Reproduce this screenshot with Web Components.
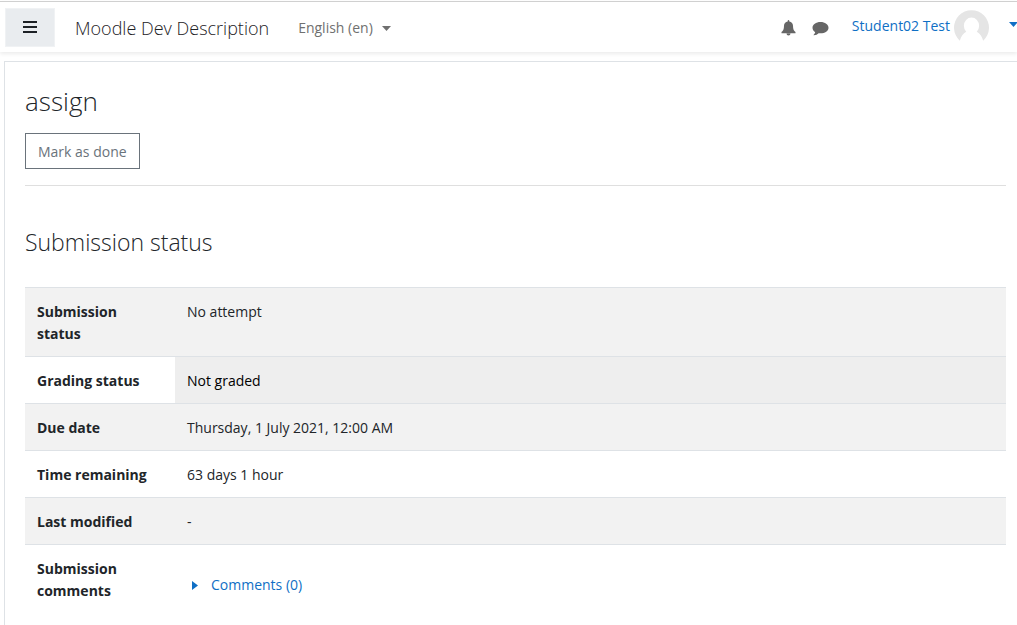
<!DOCTYPE html>
<html lang="en">
<head>
<meta charset="utf-8">
<meta name="viewport" content="width=device-width, initial-scale=1">
<title>Moodle Dev Description: assign</title>
<style>
  html, body { margin: 0; }
  body {
    background: #fff;
    color: #212529;
    font: 14px/22px "Segoe UI", "Open Sans", "Noto Sans", sans-serif;
    overflow-x: hidden;
  }
</style>
</head>
<body>
<moodle-page></moodle-page>

<template id="navbar-template">
  <style>
    :host { display: block; border-top: 1px solid #d0d0d0; margin-top: 1px; background: #fff; box-shadow: 0 2px 4px rgba(0,0,0,.08); overflow-x: clip; }
    nav { display: flex; align-items: center; height: 50px; padding-left: 5px; }
    .toggle { width: 50px; height: 39px; padding: 0; border: 1px solid #f0f2f4; background: #e9ecef; display: grid; place-items: center; }
    .toggle svg { display: block; }
    .brand { margin-left: 20px; font-size: 18px; font-weight: 300; color: #1d2125; text-decoration: none; white-space: nowrap; padding-top: 2px; }
    .lang { margin-left: 29px; padding: 2px 0 0; border: 0; background: none; font: inherit; color: #707070; display: flex; align-items: center; gap: 9px; white-space: nowrap; }
    .icons { margin-left: auto; display: flex; align-items: center; gap: 16px; margin-right: 23px; padding-top: 2px; }
    .icons button { padding: 0; border: 0; background: none; display: block; color: #666; }
    .icons svg { display: block; }
    .user { display: flex; align-items: center; gap: 4px; color: #0f6fc5; text-decoration: none; white-space: nowrap; }
    .name { padding-bottom: 2px; }
    .caret { margin: 0 -1px 6px 16px; }
  </style>
  <nav aria-label="Site">
    <button class="toggle" type="button" aria-label="Side panel">
      <svg width="14" height="12" viewBox="0 0 14 12"><path d="M0 1h14M0 6h14M0 11h14" stroke="#1d2125" stroke-width="2"/></svg>
    </button>
    <a class="brand" href="#">Moodle Dev Description</a>
    <button class="lang" type="button">English (en)<caret-icon></caret-icon></button>
    <div class="icons">
      <button type="button" aria-label="Notifications">
        <svg width="15" height="16" viewBox="0 0 15 16" fill="currentColor"><path d="M6.7 1.4V.9a.8.8 0 0 1 1.600 0v.5c2.300.4 3.700 2.100 3.700 4.300 0 3.400.8 5 2.500 6.400v1.100H.5v-1.100C2.200 10.700 3 9.100 3 5.700c0-2.200 1.400-3.900 3.700-4.300zM5.500 13.500h4a2 2 0 0 1-4 0z"/></svg>
      </button>
      <button type="button" aria-label="Messages">
        <svg width="17" height="15" viewBox="0 0 17 15" fill="currentColor"><path d="M8.500 1C13 1 16.500 3.500 16.500 6.700s-3.500 5.600-8 5.600c-.7 0-1.300 0-1.900-.1-1.200 1.200-2.700 1.900-4.700 2.100-.4 0-.5-.3-.2-.6.800-.7 1.300-1.500 1.500-2.500C1.500 10.100.5 8.500.5 6.700.5 3.500 4 1 8.500 1z"/></svg>
      </button>
    </div>
    <a class="user" href="#"><span class="name">Student02 Test</span>
      <svg width="35" height="35" viewBox="0 0 35 35" aria-hidden="true">
        <path d="M5.800 30.700A17.500 17.500 0 1 1 29.200 30.700C28 26.500 25.800 23.500 22.800 21.800A7.600 8.300 0 1 0 12.200 21.800C9.200 23.500 7 26.500 5.800 30.700z" fill="#e5e5e5"/>
      </svg>
      <caret-icon class="caret"></caret-icon>
    </a>
  </nav>
</template>

<template id="caret-template">
  <style>
    :host { display: block; width: 9px; height: 5px; flex: none; }
    svg { display: block; }
  </style>
  <svg width="9" height="5" viewBox="0 0 9 5" aria-hidden="true"><path d="M0 0h9L4.500 5z" fill="currentColor"/></svg>
</template>

<template id="card-template">
  <style>
    :host { display: block; margin: 9px 0 0 4px; padding: 22px 11px 24px 20px; border: solid #dee2e6; border-width: 1px 0 1px 1px; background: #fff; }
    header { border-bottom: 1px solid #dfdfdf; padding-bottom: 16px; }
    h2 { margin: 0 0 14px; font-size: 26px; line-height: 35px; font-weight: 300; }
  </style>
  <header>
    <h2><slot name="title"></slot></h2>
    <slot name="action"></slot>
  </header>
  <slot></slot>
</template>

<template id="done-template">
  <style>
    :host { display: block; }
    button { display: block; height: 36px; padding: 2px 12px 0; border: 1px solid #6a737b; background: #fff; color: #6a737b; font: inherit; }
  </style>
  <button type="button"><slot></slot></button>
</template>

<template id="status-template">
  <style>
    :host { display: block; margin-top: 40px; }
    h3 { margin: 0 0 28px; font-size: 23px; line-height: 33px; font-weight: 300; }
    table { width: 100%; border-collapse: collapse; table-layout: fixed; }
    col.label { width: 150px; }
    th, td { padding: 13px 12px 11px; text-align: left; vertical-align: top; border-top: 1px solid #dee2e6; }
    th { font-weight: 700; }
    tr:nth-child(odd) { background: #f2f2f2; }
    tr:nth-child(even) { background: #fff; }
    td.hover { background: #eee; color: #000; }
    td.comments { vertical-align: bottom; }
    a { display: flex; align-items: center; gap: 13px; padding: 0 0 6px 5px; color: #0f6fc5; text-decoration: none; }
  </style>
  <h3 id="heading">Submission status</h3>
  <table aria-labelledby="heading">
    <colgroup><col class="label"><col></colgroup>
    <tbody>
      <tr><th scope="row">Submission status</th><td>No attempt</td></tr>
      <tr><th scope="row">Grading status</th><td class="hover">Not graded</td></tr>
      <tr><th scope="row">Due date</th><td>Thursday, 1 July 2021, 12:00 AM</td></tr>
      <tr><th scope="row">Time remaining</th><td>63 days 1 hour</td></tr>
      <tr><th scope="row">Last modified</th><td>-</td></tr>
      <tr><th scope="row">Submission comments</th><td class="comments"><a href="#"><svg width="6" height="9" viewBox="0 0 6 9" aria-hidden="true"><path d="M0 0l6 4.500L0 9z" fill="currentColor"/></svg>Comments (0)</a></td></tr>
    </tbody>
  </table>
</template>

<template id="page-template">
  <style>:host { display: block; }</style>
  <site-navbar></site-navbar>
  <main>
    <activity-card>
      <span slot="title">assign</span>
      <done-button slot="action">Mark as done</done-button>
      <submission-status></submission-status>
    </activity-card>
  </main>
</template>

<script>
  class TemplateElement extends HTMLElement {
    constructor() {
      super();
      const template = document.getElementById(this.constructor.template);
      this.attachShadow({ mode: "open" }).append(template.content.cloneNode(true));
    }
  }
  class CaretIcon extends TemplateElement { static template = "caret-template"; }
  class SiteNavbar extends TemplateElement { static template = "navbar-template"; }
  class DoneButton extends TemplateElement { static template = "done-template"; }
  class SubmissionStatus extends TemplateElement { static template = "status-template"; }
  class ActivityCard extends TemplateElement { static template = "card-template"; }
  class MoodlePage extends TemplateElement { static template = "page-template"; }

  customElements.define("caret-icon", CaretIcon);
  customElements.define("site-navbar", SiteNavbar);
  customElements.define("done-button", DoneButton);
  customElements.define("submission-status", SubmissionStatus);
  customElements.define("activity-card", ActivityCard);
  customElements.define("moodle-page", MoodlePage);
</script>
</body>
</html>
